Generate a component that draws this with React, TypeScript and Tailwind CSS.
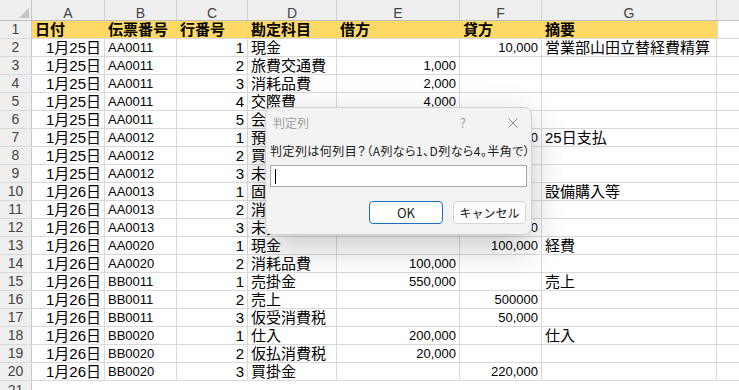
import React from "react";

const cols = [
  { key: "A", w: "w-[73px]" },
  { key: "B", w: "w-[72px]" },
  { key: "C", w: "w-[71px]" },
  { key: "D", w: "w-[89px]" },
  { key: "E", w: "w-[123px]" },
  { key: "F", w: "w-[82px]" },
  { key: "G", w: "w-[175px]" },
];

type Row = [string, string, string, string, string, string, string];

const rows: Row[] = [
  ["1月25日", "AA0011", "1", "現金", "", "10,000", "営業部山田立替経費精算"],
  ["1月25日", "AA0011", "2", "旅費交通費", "1,000", "", ""],
  ["1月25日", "AA0011", "3", "消耗品費", "2,000", "", ""],
  ["1月25日", "AA0011", "4", "交際費", "4,000", "", ""],
  ["1月25日", "AA0011", "5", "会議費", "3,000", "", ""],
  ["1月25日", "AA0012", "1", "預り金", "", "10,000", "25日支払"],
  ["1月25日", "AA0012", "2", "買掛金", "5,000", "", ""],
  ["1月25日", "AA0012", "3", "未払金", "5,000", "", ""],
  ["1月26日", "AA0013", "1", "固定資産", "150,000", "", "設備購入等"],
  ["1月26日", "AA0013", "2", "消費税", "15,000", "", ""],
  ["1月26日", "AA0013", "3", "未払金", "", "165,000", ""],
  ["1月26日", "AA0020", "1", "現金", "", "100,000", "経費"],
  ["1月26日", "AA0020", "2", "消耗品費", "100,000", "", ""],
  ["1月26日", "BB0011", "1", "売掛金", "550,000", "", "売上"],
  ["1月26日", "BB0011", "2", "売上", "", "500000", ""],
  ["1月26日", "BB0011", "3", "仮受消費税", "", "50,000", ""],
  ["1月26日", "BB0020", "1", "仕入", "200,000", "", "仕入"],
  ["1月26日", "BB0020", "2", "仮払消費税", "20,000", "", ""],
  ["1月26日", "BB0020", "3", "買掛金", "", "220,000", ""],
];

const headers = ["日付", "伝票番号", "行番号", "勘定科目", "借方", "貸方", "摘要"];

// which columns hold numbers (right aligned)
const rightCols = [0, 2, 4, 5];
const latinCols = [1, 4, 5];

function RowHead({ n }: { n: number }) {
  return (
    <div className="w-[32px] shrink-0 bg-[#efefef] border-r border-[#c6c6c6] flex items-center justify-center text-[14px] text-[#444]">
      {n}
    </div>
  );
}

export default function App() {
  return (
    <div
      className="relative w-[739px] h-[390px] overflow-hidden bg-white text-black"
      style={{ fontFamily: '"Liberation Sans", "Noto Sans CJK JP", sans-serif' }}
    >
      {/* column letters */}
      <div className="flex h-[21px] border-b border-[#bdbdbd] bg-[#efefef]">
        <div className="relative w-[32px] shrink-0 border-r border-[#c6c6c6]">
          <svg className="absolute left-[19px] top-[8px]" width="10" height="10" viewBox="0 0 10 10">
            <polygon points="10,0 10,10 0,10" fill="#c4c4c4" />
          </svg>
        </div>
        {cols.map((c) => (
          <div
            key={c.key}
            className={`${c.w} shrink-0 border-r border-[#d2d2d2] flex items-center justify-center pt-[5px] text-[14px] leading-none text-[#444]`}
          >
            {c.key}
          </div>
        ))}
        <div className="flex-1" />
      </div>

      {/* header row 1 */}
      <div className="flex h-[18px] border-b border-[#d9d9d9]">
        <RowHead n={1} />
        <div className="flex bg-[#ffd966]">
          {cols.map((c, i) => (
            <div
              key={c.key}
              className={`${c.w} shrink-0 flex items-center px-[3px] text-[15px] font-bold leading-none`}
            >
              {headers[i]}
            </div>
          ))}
        </div>
        <div className="flex-1 border-l border-[#d9d9d9]" />
      </div>

      {rows.map((r, ri) => (
        <div key={ri} className="flex h-[18px] border-b border-[#d9d9d9]">
          <RowHead n={ri + 2} />
          {cols.map((c, i) => (
            <div
              key={c.key}
              className={`${c.w} shrink-0 border-r border-[#d9d9d9] flex items-center overflow-visible whitespace-nowrap px-[3px] leading-none ${
                rightCols.includes(i) ? "justify-end" : "justify-start"
              } ${latinCols.includes(i) ? "text-[13px]" : "text-[15px]"}`}
            >
              {r[i]}
            </div>
          ))}
          <div className="flex-1" />
        </div>
      ))}
      <div className="flex h-[18px]">
        <RowHead n={21} />
      </div>

      {/* input dialog */}
      <div
        className="absolute left-[265px] top-[107px] w-[267px] h-[128px] rounded-[8px] bg-[#f3f3f3] border border-[#cfcfcf] shadow-[0_12px_36px_rgba(0,0,0,0.22)] flex flex-col"
        style={{ fontFamily: '"Noto Sans CJK JP", sans-serif' }}
      >
        <div className="flex items-center h-[30px] pl-[7px] pr-[13px] text-[12px] text-[#a0a0a0]">
          <span>判定列</span>
          <span className="ml-auto mr-[42px] text-[13px]">?</span>
          <svg width="10" height="10" viewBox="0 0 10 10">
            <path d="M0.5 0.5 L9.5 9.5 M9.5 0.5 L0.5 9.5" stroke="#8a8a8a" strokeWidth="1" />
          </svg>
        </div>
        <div className="px-[4px] mt-[7px] text-[12px] text-[#1a1a1a] leading-none whitespace-nowrap tracking-[0.45px] [font-feature-settings:'palt']">
          判定列は何列目？（A列なら1、D列なら4。半角で）
        </div>
        <div className="mx-[4px] mt-[8px] h-[22px] bg-white border border-[#a8a8a8] flex items-center pl-[4px]">
          <div className="w-px h-[15px] bg-black" />
        </div>
        <div className="flex justify-end gap-[10px] mt-[14px] pr-[5px]">
          <button className="w-[74px] h-[23px] rounded-[4px] bg-white border border-[#1a6fc4] text-[13px] text-[#1a1a1a] flex items-center justify-center">
            OK
          </button>
          <button className="w-[73px] h-[23px] rounded-[4px] bg-[#fdfdfd] border border-[#d6d6d6] text-[12px] text-[#1a1a1a] flex items-center justify-center">
            キャンセル
          </button>
        </div>
      </div>
    </div>
  );
}
